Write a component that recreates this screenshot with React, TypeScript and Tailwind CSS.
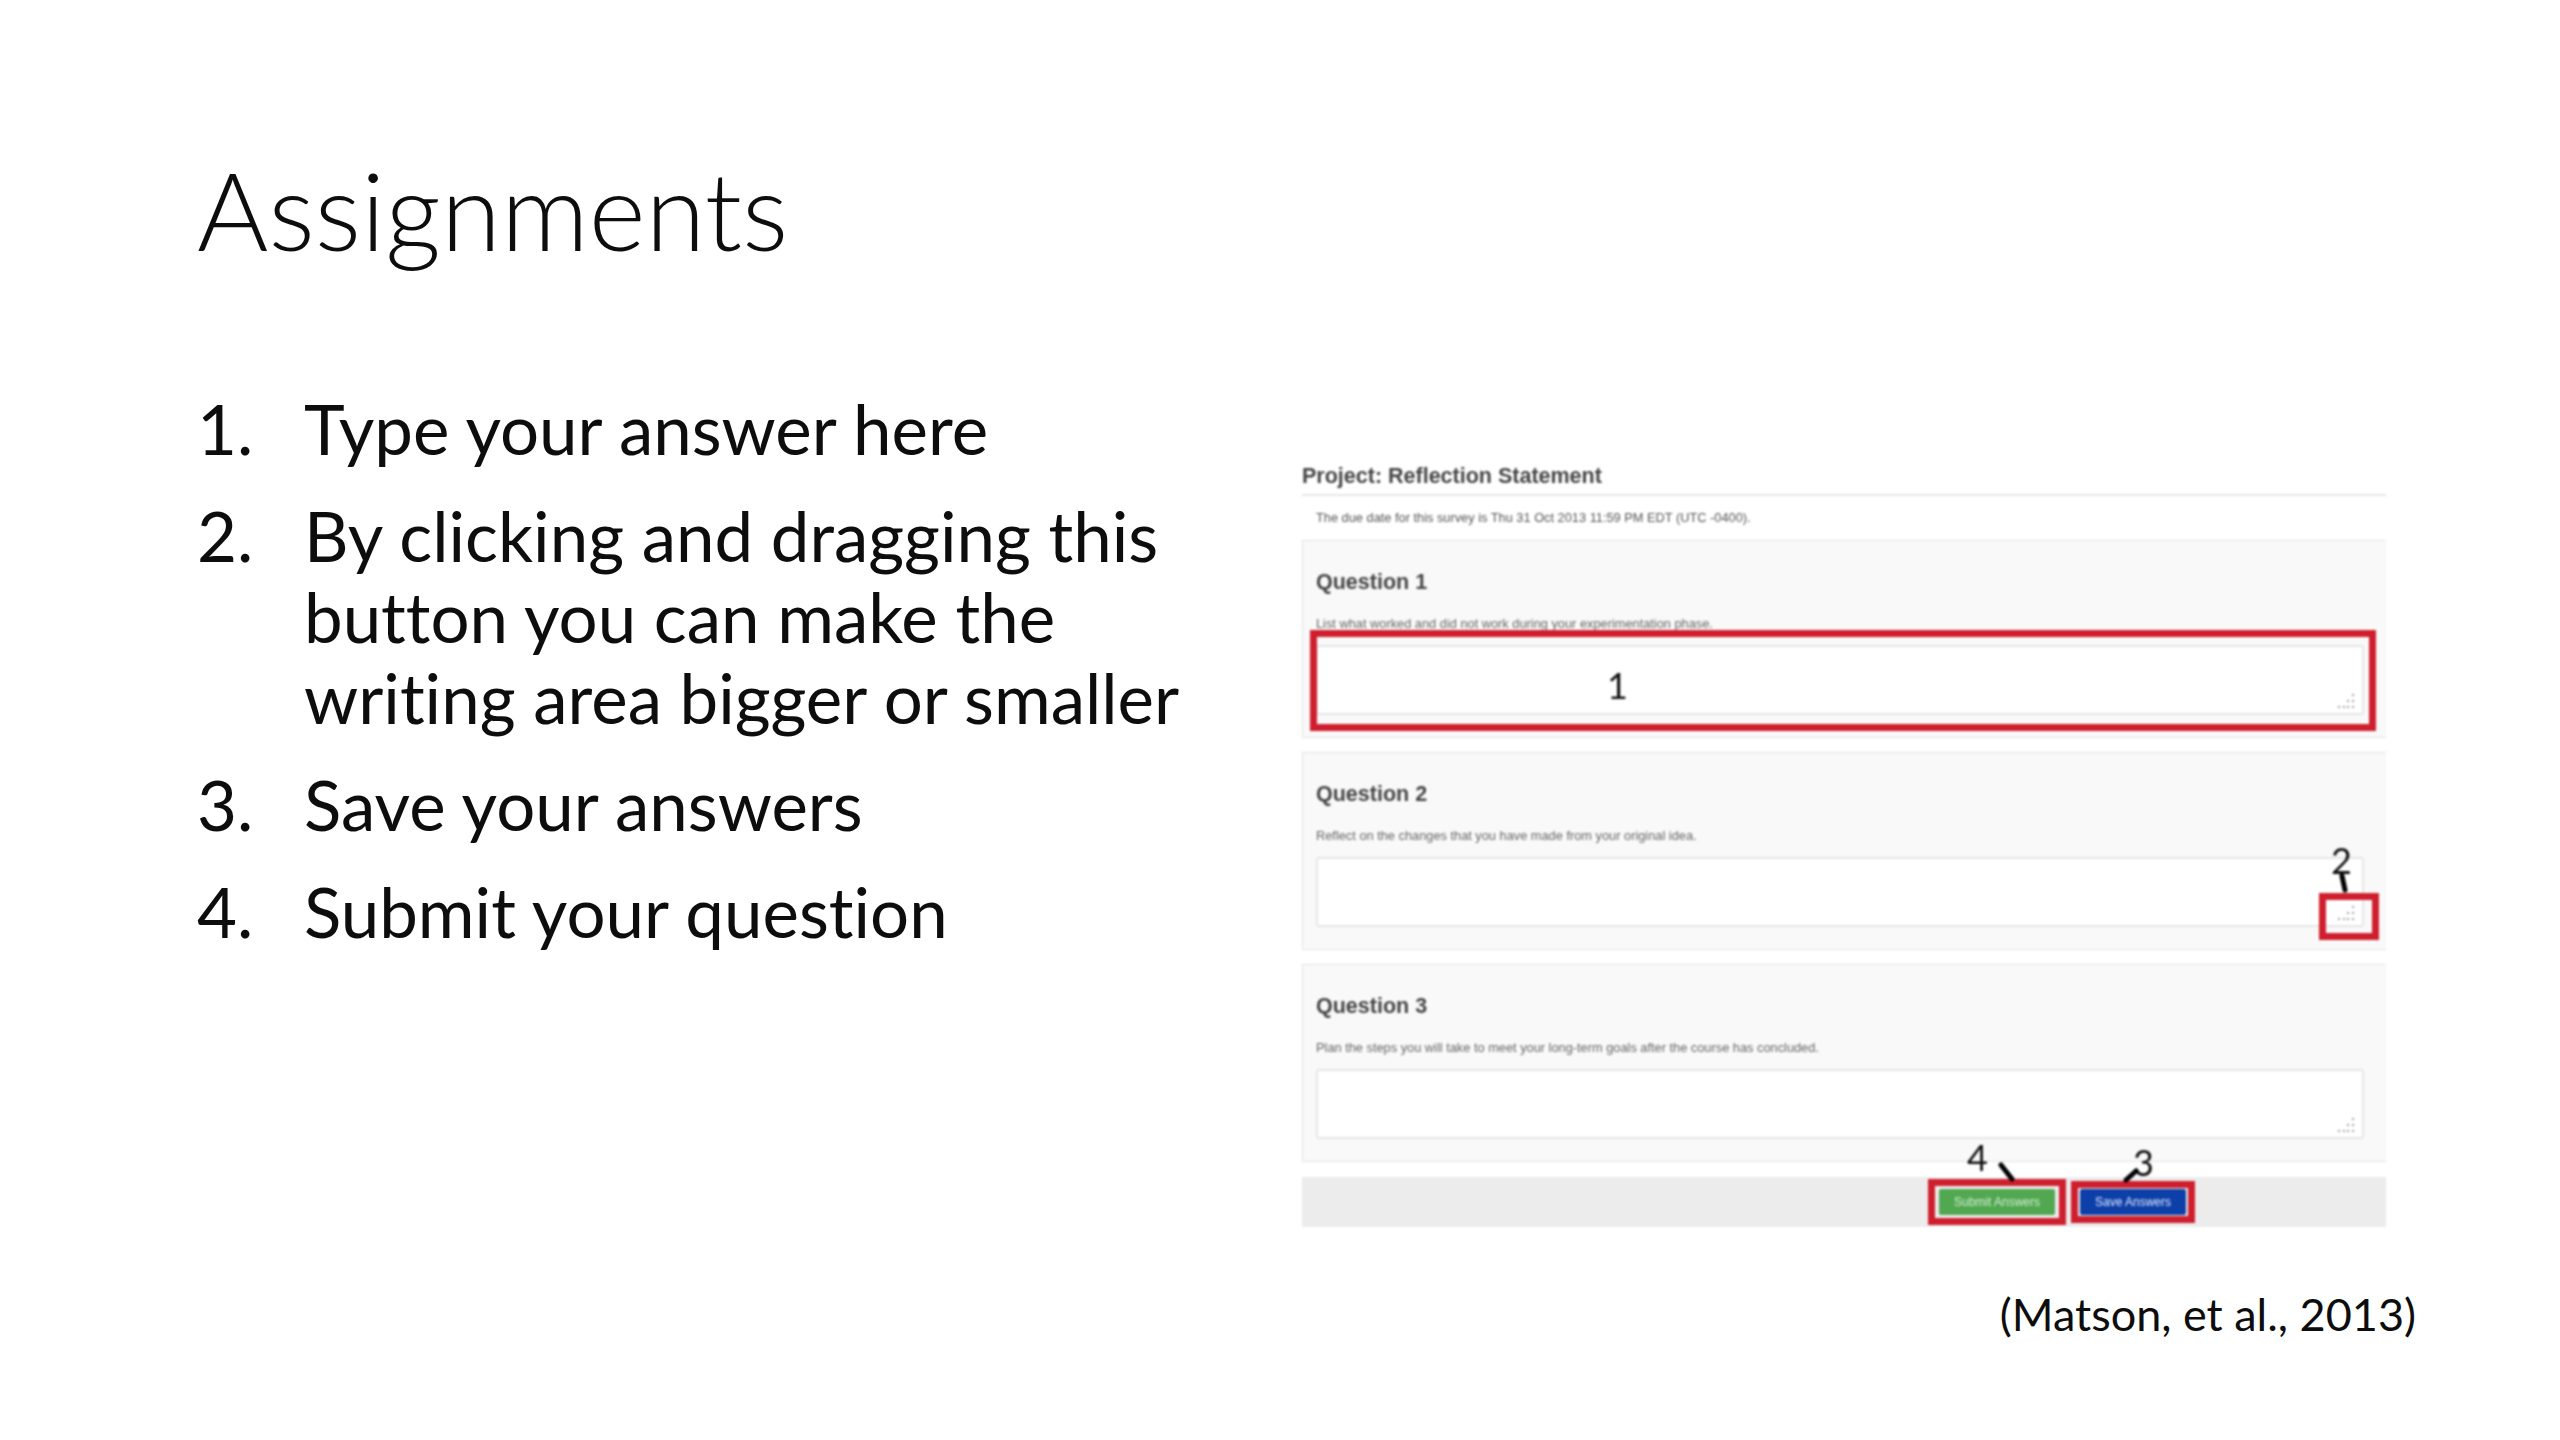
const sans = "font-['Liberation_Sans',Arial,sans-serif]";
const note = "absolute font-['Lato',sans-serif] text-[36px] leading-[44px] text-[#111]";
const frame = "absolute border-[7px] border-[#cf1f2e]";

function Grip() {
  return (
    <svg className="absolute bottom-[4px] right-[8px]" width="16" height="16" viewBox="0 0 16 16" fill="#a3a3a3">
      {[[14, 1], [9, 7], [14, 7], [0, 13], [5, 13], [9, 13], [14, 13]].map(([x, y]) => (
        <rect key={`${x}-${y}`} x={x} y={y} width="2" height="2" />
      ))}
    </svg>
  );
}

function Question({ title, text }: { title: string; text: string }) {
  return (
    <section className="h-[198px] border border-r-0 border-[#e4e4e4] bg-[#f9f9f9] pl-[13px] pr-[22px] pt-[26px]">
      <h3 className="h-[30px] text-[21.5px] font-bold leading-[30px] text-[#444]">{title}</h3>
      <p className="mt-[19px] h-[16px] text-[12.8px] leading-[16px] text-[#666]">{text}</p>
      <div className="relative mt-[13px] h-[70px] rounded-[3px] border-2 border-[#e6e6e6] bg-white">
        <Grip />
      </div>
    </section>
  );
}

function Arrow({ className, d, w, h }: { className: string; d: string; w: number; h: number }) {
  return (
    <svg className={`absolute ${className}`} width={w} height={h} viewBox={`0 0 ${w} ${h}`} fill="none">
      <path d={d} stroke="#000" strokeWidth="5" strokeLinecap="round" />
    </svg>
  );
}

const items = [
  "Type your answer here",
  "By clicking and dragging this button you can make the writing area bigger or smaller",
  "Save your answers",
  "Submit your question",
];

export default function App() {
  return (
    <div className="h-[1440px] w-[2560px] overflow-hidden bg-white pl-[197px] pt-[149px] font-['Lato',sans-serif] text-[#0d0d0d] [font-variant-ligatures:none]">
      <h1 className="h-[120px] text-[109px] font-light leading-[120px]">Assignments</h1>
      <div className="mt-[119px] flex">
        <ol className="flex w-[1105px] flex-col gap-[26px] text-[69px] leading-[81px]">
          {items.map((t, i) => (
            <li key={t} className="flex">
              <span className="w-[107px] shrink-0">{i + 1}.</span>
              <span className="w-[930px]">{t}</span>
            </li>
          ))}
        </ol>
        <div className="mt-[77px] w-[1114px]">
          <div className={`relative w-[1084px] blur-[1px] ${sans}`}>
            <h2 className="h-[22px] text-[21.5px] font-bold leading-[22px] text-[#444]">Project: Reflection Statement</h2>
            <div className="mt-[7px] h-[2px] bg-[#e6e6e6]" />
            <p className="ml-[14px] mt-[14px] h-[16px] text-[12.8px] leading-[16px] text-[#555]">
              The due date for this survey is Thu 31 Oct 2013 11:59 PM EDT (UTC -0400).
            </p>
            <div className="mt-[14px] flex flex-col gap-[14px]">
              <Question title="Question 1" text="List what worked and did not work during your experimentation phase." />
              <Question title="Question 2" text="Reflect on the changes that you have made from your original idea." />
              <Question title="Question 3" text="Plan the steps you will take to meet your long-term goals after the course has concluded." />
            </div>
            <div className="mt-[15px] flex h-[50px] items-center gap-[5px] bg-[#ececec] pl-[626px]">
              <div className="flex h-[46px] w-[138px] items-center justify-center border-[7px] border-[#cf1f2e]">
                <button className="h-[26px] w-[116px] rounded-[2px] bg-[#51a851] text-[12px] text-[#d5ecd5]">Submit Answers</button>
              </div>
              <div className="flex h-[42px] w-[124px] items-center justify-center border-[7px] border-[#cf1f2e]">
                <button className="h-[26px] w-[106px] rounded-[2px] bg-[#0d3fa8] text-[12px] text-[#dfe8ff]">Save Answers</button>
              </div>
            </div>

            <div className={`${frame} left-[8px] top-[165px] h-[101px] w-[1066px]`} />
            <div className={`${frame} left-[1017px] top-[428px] h-[47px] w-[60px]`} />

            <span className={`${note} left-[305px] top-[198px]`}>1</span>
            <span className={`${note} left-[1029px] top-[373px]`}>2</span>
            <span className={`${note} left-[831px] top-[675px]`}>3</span>
            <span className={`${note} left-[665px] top-[670px]`}>4</span>
            <Arrow className="left-[1037px] top-[408px]" w={10} h={20} d="M3 3 L6 17" />
            <Arrow className="left-[696px] top-[697px]" w={17} h={20} d="M3 3 L14 17" />
            <Arrow className="left-[821px] top-[703px]" w={16} h={15} d="M3 12 L13 3" />
          </div>
          <p className="mt-[62px] h-[50px] text-right text-[45px] leading-[50px]">(Matson, et al., 2013)</p>
        </div>
      </div>
    </div>
  );
}
